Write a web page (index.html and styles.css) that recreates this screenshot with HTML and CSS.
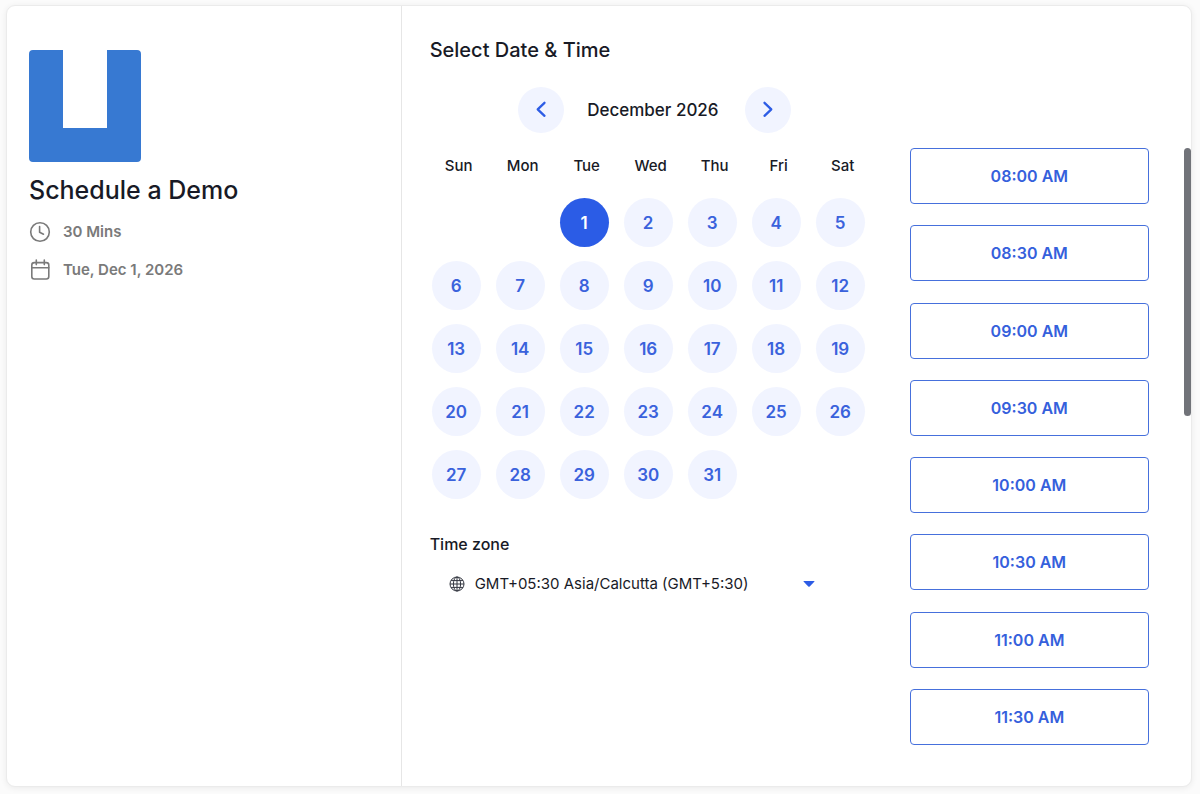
FILE: index.html
```html
<!DOCTYPE html>
<html lang="en">
<head>
<meta charset="utf-8">
<meta name="viewport" content="width=device-width, initial-scale=1">
<title>Schedule a Demo</title>
<link rel="stylesheet" href="styles.css">
</head>
<body>
<main class="card">
  <aside class="summary">
    <svg class="logo" viewBox="0 0 112 112" role="img" aria-label="Logo"><path fill="#3779d2" d="M4 0H34V78H78V0H108A4 4 0 0 1 112 4V108A4 4 0 0 1 108 112H4A4 4 0 0 1 0 108V4A4 4 0 0 1 4 0Z"/></svg>
    <h1 class="title">Schedule a Demo</h1>
    <ul class="facts">
      <li class="fact">
        <svg class="fact-icon" viewBox="0 0 22 22" aria-hidden="true"><circle cx="11" cy="11" r="9.3"/><path d="M10.6 5.5V11.2L14.5 13.2"/></svg>
        <span>30 Mins</span>
      </li>
      <li class="fact">
        <svg class="fact-icon" viewBox="0 0 22 22" aria-hidden="true"><rect x="2.8" y="3.6" width="17" height="16.4" rx="2.5"/><path d="M2.8 8.8H19.8M7.3 1V5.6M15.3 1V5.6"/></svg>
        <span>Tue, Dec 1, 2026</span>
      </li>
    </ul>
  </aside>
  <section class="picker">
    <h2 class="heading">Select Date &amp; Time</h2>
    <div class="columns">
      <div class="calendar">
        <div class="month-nav">
          <button class="nav-button" type="button" aria-label="Previous month"><svg class="chevron" viewBox="0 0 16 18" aria-hidden="true"><path d="M11.5 1.8L4.7 8.3L11.5 14.8"/></svg></button>
          <span class="month">December 2026</span>
          <button class="nav-button" type="button" aria-label="Next month"><svg class="chevron" viewBox="0 0 16 18" aria-hidden="true"><path d="M4.5 1.8L11.3 8.3L4.5 14.8"/></svg></button>
        </div>
        <table class="days">
          <thead><tr><th>Sun</th><th>Mon</th><th>Tue</th><th>Wed</th><th>Thu</th><th>Fri</th><th>Sat</th></tr></thead>
          <tbody>
            <tr><td></td><td></td><td><button class="day selected" type="button">1</button></td><td><button class="day" type="button">2</button></td><td><button class="day" type="button">3</button></td><td><button class="day" type="button">4</button></td><td><button class="day" type="button">5</button></td></tr>
            <tr><td><button class="day" type="button">6</button></td><td><button class="day" type="button">7</button></td><td><button class="day" type="button">8</button></td><td><button class="day" type="button">9</button></td><td><button class="day" type="button">10</button></td><td><button class="day" type="button">11</button></td><td><button class="day" type="button">12</button></td></tr>
            <tr><td><button class="day" type="button">13</button></td><td><button class="day" type="button">14</button></td><td><button class="day" type="button">15</button></td><td><button class="day" type="button">16</button></td><td><button class="day" type="button">17</button></td><td><button class="day" type="button">18</button></td><td><button class="day" type="button">19</button></td></tr>
            <tr><td><button class="day" type="button">20</button></td><td><button class="day" type="button">21</button></td><td><button class="day" type="button">22</button></td><td><button class="day" type="button">23</button></td><td><button class="day" type="button">24</button></td><td><button class="day" type="button">25</button></td><td><button class="day" type="button">26</button></td></tr>
            <tr><td><button class="day" type="button">27</button></td><td><button class="day" type="button">28</button></td><td><button class="day" type="button">29</button></td><td><button class="day" type="button">30</button></td><td><button class="day" type="button">31</button></td><td></td><td></td></tr>
          </tbody>
        </table>
        <label class="zone-label" for="zone">Time zone</label>
        <div class="zone">
          <svg class="globe" viewBox="0 0 16 16" aria-hidden="true"><circle cx="8" cy="8" r="7"/><ellipse cx="8" cy="8" rx="3.6" ry="7"/><path d="M8 1V15M1 8H15M2 4.6H14M2 11.4H14"/></svg>
          <select class="zone-select" id="zone"><option>GMT+05:30 Asia/Calcutta (GMT+5:30)</option></select>
          <svg class="caret" viewBox="0 0 12 6" aria-hidden="true"><path d="M1 0H11Q12 0 11.3 .8L6.7 5.4Q6 6 5.3 5.4L.7 .8Q0 0 1 0Z"/></svg>
        </div>
      </div>
      <div class="times">
        <button class="slot" type="button">08:00 AM</button>
        <button class="slot" type="button">08:30 AM</button>
        <button class="slot" type="button">09:00 AM</button>
        <button class="slot" type="button">09:30 AM</button>
        <button class="slot" type="button">10:00 AM</button>
        <button class="slot" type="button">10:30 AM</button>
        <button class="slot" type="button">11:00 AM</button>
        <button class="slot" type="button">11:30 AM</button>
      </div>
      <div class="scroll-track"><div class="scroll-thumb"></div></div>
    </div>
  </section>
</main>
</body>
</html>
```
FILE: styles.css
```css
* {
  box-sizing: border-box;
}

body {
  margin: 0;
  min-height: 100vh;
  padding: 5px 8px 7px 6px;
  display: flex;
  background: #fbfbfb;
  color: #181a26;
  font-family: Inter, "Liberation Sans", sans-serif;
}

button,
select {
  font: inherit;
  cursor: pointer;
}

.card {
  flex: 1;
  display: grid;
  grid-template-columns: 1fr 2fr;
  background: #fff;
  border: 1px solid #ebebeb;
  border-radius: 9px;
  box-shadow: 0 1px 6px rgba(0, 0, 0, 0.07);
}

.summary {
  padding: 44px 22px;
}

.logo {
  display: block;
  width: 112px;
  height: 112px;
}

.title {
  margin: 12px 0 0;
  font-size: 25px;
  line-height: 32px;
  font-weight: 500;
}

.facts {
  display: grid;
  gap: 14px;
  margin: 14px 0 0;
  padding: 0;
  list-style: none;
}

.fact {
  display: flex;
  align-items: center;
  gap: 12px;
  color: #7a7a7a;
  font-size: 15px;
  line-height: 24px;
  font-weight: 600;
}

.fact-icon {
  width: 22px;
  height: 22px;
  fill: none;
  stroke: #7a7a7a;
  stroke-width: 1.6;
  stroke-linecap: round;
  stroke-linejoin: round;
}

.picker {
  display: flex;
  flex-direction: column;
  margin-left: -1px;
  padding: 29px 0 41px 28px;
  border-left: 1px solid #e6e6e6;
}

.heading {
  margin: 0;
  font-size: 20px;
  line-height: 30px;
  font-weight: 500;
}

.columns {
  flex: 1;
  display: grid;
  grid-template-columns: 480px 1fr 42px;
  padding-top: 22px;
}

.calendar {
  width: 450px;
}

.month-nav {
  display: grid;
  grid-template-columns: 46px 135px 46px;
  justify-content: center;
  column-gap: 23px;
  align-items: center;
}

.nav-button {
  display: grid;
  place-items: center;
  width: 46px;
  height: 46px;
  padding: 0;
  border: 0;
  border-radius: 50%;
  background: #f1f4ff;
}

.chevron {
  width: 16px;
  height: 18px;
  fill: none;
  stroke: #2d5ce5;
  stroke-width: 2.3;
  stroke-linecap: round;
  stroke-linejoin: round;
}

.month {
  font-size: 17px;
  line-height: 24px;
  font-weight: 500;
}

.days {
  width: 448px;
  margin: 23px 0 0 2px;
  table-layout: fixed;
  border-collapse: collapse;
}

.days th {
  padding: 0 10px 22px 0;
  font-size: 15px;
  line-height: 20px;
  font-weight: 500;
  text-align: center;
}

.days td {
  padding: 0 0 14px;
}

.day {
  display: block;
  width: 49px;
  height: 49px;
  padding: 0;
  border: 0;
  border-radius: 50%;
  background: #f1f4ff;
  color: #3a62dc;
  font-size: 17px;
  font-weight: 600;
}

.day.selected {
  background: #2b5ce6;
  color: #fff;
}

.zone-label {
  display: block;
  margin-top: 19px;
  font-size: 16px;
  line-height: 24px;
  font-weight: 500;
}

.zone {
  position: relative;
  display: flex;
  align-items: center;
  gap: 10px;
  width: 386px;
  margin-top: 16px;
  padding-left: 19px;
}

.globe {
  width: 16px;
  height: 16px;
  fill: none;
  stroke: #333640;
  stroke-width: 1;
}

.zone-select {
  flex: 1;
  padding: 0 20px 0 0;
  border: 0;
  background: transparent;
  color: #181a26;
  appearance: none;
  font-size: 15px;
  line-height: 24px;
}

.caret {
  position: absolute;
  right: 1px;
  width: 12px;
  height: 6px;
  fill: #2d5ce5;
  pointer-events: none;
}

.times {
  display: flex;
  flex-direction: column;
  justify-content: space-between;
  margin-top: 61px;
}

.slot {
  height: 56px;
  border: 1px solid #4670dc;
  border-radius: 4px;
  background: #fff;
  color: #3560dc;
  font-size: 16px;
  font-weight: 600;
}

.scroll-track {
  display: flex;
  justify-content: flex-end;
  margin-top: 61px;
}

.scroll-thumb {
  width: 7px;
  height: 268px;
  border-radius: 4px;
  background: #717379;
}
```
